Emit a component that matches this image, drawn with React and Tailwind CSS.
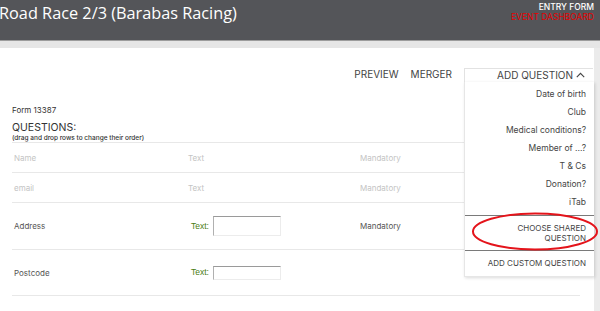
import React from "react";

const ui = { fontFamily: "Inter, 'Noto Sans', sans-serif" };

function Row({ name, type, mandatory, faded, input, tall }) {
  const color = faded ? "text-[#c4c4c4]" : "text-[#555]";
  return (
    <div className={`flex items-center border-b border-[#e8e8e8] ${tall}`}>
      <div className={`w-[176px] pl-[2px] text-[8px] ${color}`}>{name}</div>
      <div className="w-[172px] flex items-center">
        {input ? (
          <>
            <span
              className="ml-[3px] text-[8.5px] text-[#4a7d12]"
              style={{ fontFamily: "'Liberation Sans', Arial, sans-serif" }}
            >
              Text:
            </span>
            <span
              className={`ml-[4px] w-[68px] bg-white border border-t-[#9a9a9a] border-l-[#b0b0b0] border-b-[#ececec] border-r-[#ececec] ${input}`}
            />
          </>
        ) : (
          <span className={`text-[8px] ${color}`}>{type}</span>
        )}
      </div>
      <div className={`text-[8px] ${color}`}>{mandatory}</div>
    </div>
  );
}

export default function App() {
  const items = [
    "Date of birth",
    "Club",
    "Medical conditions?",
    "Member of ...?",
    "T & Cs",
    "Donation?",
    "iTab",
  ];
  return (
    <div className="relative w-[600px] h-[311px] overflow-hidden bg-white" style={ui}>
      {/* header */}
      <div className="h-[40px] bg-[#545559] flex justify-between">
        <div
          className="ml-[-1px] pt-[3px] text-[16.3px] leading-[20px] text-white"
          style={{ fontFamily: "'Open Sans', 'Noto Sans', sans-serif" }}
        >
          Road Race 2/3 (Barabas Racing)
        </div>
        <div className="pr-[6px] pt-[2px] flex flex-col items-end text-[8.5px] leading-[10px]">
          <span className="text-white font-medium">ENTRY FORM</span>
          <span className="text-[#e60000]">EVENT DASHBOARD</span>
        </div>
      </div>
      <div className="h-[8px] border-t border-[#9c9c9c] bg-[#e6e6e6]" />

      <div className="flex h-[263px]">
        <div className="w-[594px] relative">
          {/* toolbar */}
          <div className="flex justify-end items-center pt-[19px] text-[10px] text-[#444]">
            <span>PREVIEW</span>
            <span className="ml-[12px]">MERGER</span>
            <div className="relative ml-[12px] mr-[1px] w-[129px] h-[14px] border-t border-l border-[#e2e2e2] flex items-center justify-end pr-[8px]">
              <span>ADD QUESTION</span>
              <svg width="9" height="6" viewBox="0 0 9 6" className="ml-[3px]">
                <polyline points="0.8,5.2 4.5,1.3 8.2,5.2" fill="none" stroke="#444" strokeWidth="1.1" />
              </svg>
              {/* dropdown */}
              <div className="absolute top-full right-[-1px] w-[130px] z-10 bg-white border-l border-b border-[#e6e6e6] shadow-[1px_1px_3px_rgba(0,0,0,0.15)] text-[#444]">
                <div className="pt-[4px] pb-[3px]">
                  {items.map((t) => (
                    <div key={t} className="h-[18px] flex items-center justify-end pr-[8px] text-[8.5px]">
                      {t}
                    </div>
                  ))}
                </div>
                <div className="border-t border-[#7a7a7a] py-[7px] pr-[8px] text-right text-[8px] leading-[10px]">
                  CHOOSE SHARED
                  <br />
                  QUESTION
                </div>
                <div className="border-t border-[#7a7a7a] h-[26px] flex items-center justify-end pr-[8px] text-[8px]">
                  ADD CUSTOM QUESTION
                </div>
              </div>
            </div>
          </div>

          <div className="px-[12px]">
            <div className="mt-[23px] text-[8px] text-[#333] leading-[10px]">Form 13387</div>
            <div className="mt-[7px] text-[10.5px] leading-[12px] text-[#333]">QUESTIONS:</div>
            <div className="text-[6.5px] leading-[8px] text-[#333] font-medium">
              (drag and drop rows to change their order)
            </div>
            <div className="w-[568px] border-t border-[#e8e8e8]">
              <Row name="Name" type="Text" mandatory="Mandatory" faded tall="h-[30px]" />
              <Row name="email" type="Text" mandatory="Mandatory" faded tall="h-[30px]" />
              <Row name="Address" mandatory="Mandatory" input="h-[20px]" tall="h-[47px]" />
              <Row name="Postcode" input="h-[14px]" tall="h-[46px]" />
            </div>
          </div>
        </div>
        <div className="w-[6px] bg-[#ebebeb]" />
      </div>

      {/* red annotation ellipse */}
      <svg className="absolute left-[470px] top-[211px] z-20" width="132" height="42" viewBox="0 0 132 42">
        <ellipse cx="65" cy="20.5" rx="62" ry="18" fill="none" stroke="#e4141b" strokeWidth="2" />
      </svg>
    </div>
  );
}
